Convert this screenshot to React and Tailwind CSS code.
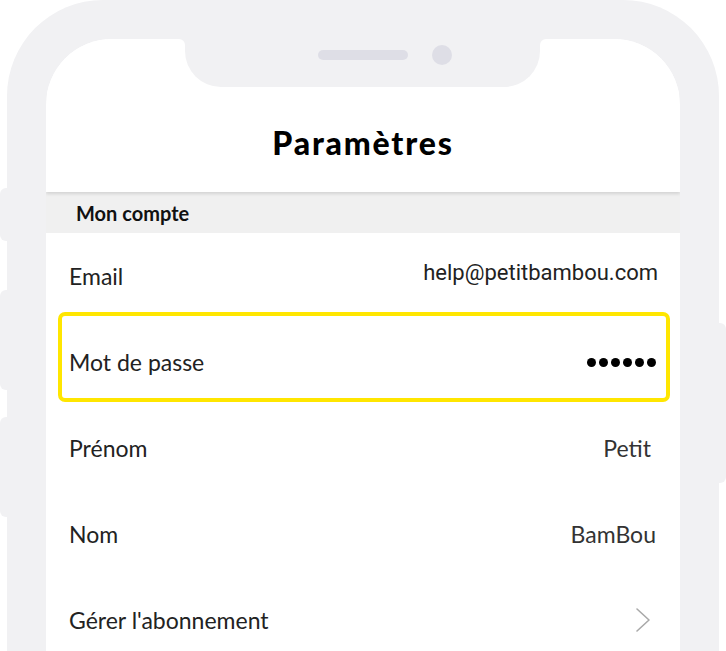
import React from 'react';

const labelFont = { fontFamily: 'Lato, "Noto Sans", sans-serif' };

const ChevronRight = () => (
    <svg width="16" height="26" viewBox="0 0 16 26" fill="none">
        <polyline points="2,2 14,13 2,24" stroke="#a9a9a9" strokeWidth="1.6" strokeLinecap="round" strokeLinejoin="round" />
    </svg>
);

const PasswordDots = () => (
    <div className="flex items-center gap-[3px]">
        { [ 0, 1, 2, 3, 4, 5 ].map(i => (
            <span key={ i } className="block w-[9px] h-[9px] rounded-full bg-black" />
        )) }
    </div>
);

const Row = ({ label, children, highlight, pr = 'pr-[22px]' }) => (
    <div className={ `relative h-[86px] flex items-center justify-between pl-[23px] ${ pr }` }>
        { highlight && (
            <div className="absolute left-[12px] right-[10px] top-[-7px] h-[90px] border-[4px] border-[#ffe600] rounded-[7px]" />
        ) }
        <span className="text-[23px] text-[#222] font-normal" style={ labelFont }>{ label }</span>
        { children }
    </div>
);

const App = () => {
    return (
        <div className="relative w-[726px] h-[651px] overflow-hidden bg-white pl-[7px]">
            {/* side buttons */}
            <div className="absolute left-0 top-[188px] w-[10px] h-[53px] rounded-l-[6px] bg-[#f1f1f3]" />
            <div className="absolute left-0 top-[290px] w-[10px] h-[100px] rounded-l-[6px] bg-[#f1f1f3]" />
            <div className="absolute left-0 top-[417px] w-[10px] h-[100px] rounded-l-[6px] bg-[#f1f1f3]" />
            <div className="absolute right-0 top-[323px] w-[10px] h-[160px] rounded-r-[6px] bg-[#f1f1f3]" />

            {/* phone frame */}
            <div className="relative w-[712px] h-[760px] bg-[#f1f1f3] rounded-t-[96px] pt-[39px] px-[39px]">
                <div className="relative w-full h-full bg-white rounded-t-[66px] overflow-hidden">
                    {/* notch */}
                    <div className="absolute left-[139px] w-[355px] top-0 h-[48px] bg-[#f1f1f3] rounded-b-[36px] z-20">
                        <div className="absolute left-[-6px] top-0 w-[6px] h-[6px] bg-[#f1f1f3]">
                            <div className="w-full h-full bg-white rounded-tr-[6px]" />
                        </div>
                        <div className="absolute right-[-6px] top-0 w-[6px] h-[6px] bg-[#f1f1f3]">
                            <div className="w-full h-full bg-white rounded-tl-[6px]" />
                        </div>
                        <div className="flex items-center h-[32px] pl-[133px] gap-[24px]">
                            <span className="block w-[90px] h-[10px] rounded-full bg-[#dedee6]" />
                            <span className="block w-[20px] h-[20px] rounded-full bg-[#dedee6]" />
                        </div>
                    </div>

                    {/* header */}
                    <div className="relative z-10 h-[153px] bg-white flex justify-center pt-[84px] shadow-[0_2px_3px_rgba(0,0,0,0.12)]">
                        <h1 className="text-[32px] leading-[40px] font-black text-black tracking-[1.8px]" style={ labelFont }>Paramètres</h1>
                    </div>

                    {/* section */}
                    <div className="h-[41px] bg-[#f0f0f0] flex items-center pl-[30px]">
                        <span className="text-[20px] font-bold text-[#111]" style={ labelFont }>Mon compte</span>
                    </div>

                    <Row label="Email">
                        <span className="text-[22px] text-[#222] -mt-[8px]" style={{ fontFamily: 'Roboto, sans-serif' }}>help@petitbambou.com</span>
                    </Row>
                    <Row label="Mot de passe" highlight pr="pr-[24px]">
                        <PasswordDots />
                    </Row>
                    <Row label="Prénom" pr="pr-[29px]">
                        <span className="text-[23px] text-[#333]" style={ labelFont }>Petit</span>
                    </Row>
                    <Row label="Nom" pr="pr-[24px]">
                        <span className="text-[23px] text-[#333]" style={ labelFont }>BamBou</span>
                    </Row>
                    <Row label="Gérer l'abonnement" pr="pr-[29px]">
                        <ChevronRight />
                    </Row>
                </div>
            </div>
        </div>
    );
}

export default App;
